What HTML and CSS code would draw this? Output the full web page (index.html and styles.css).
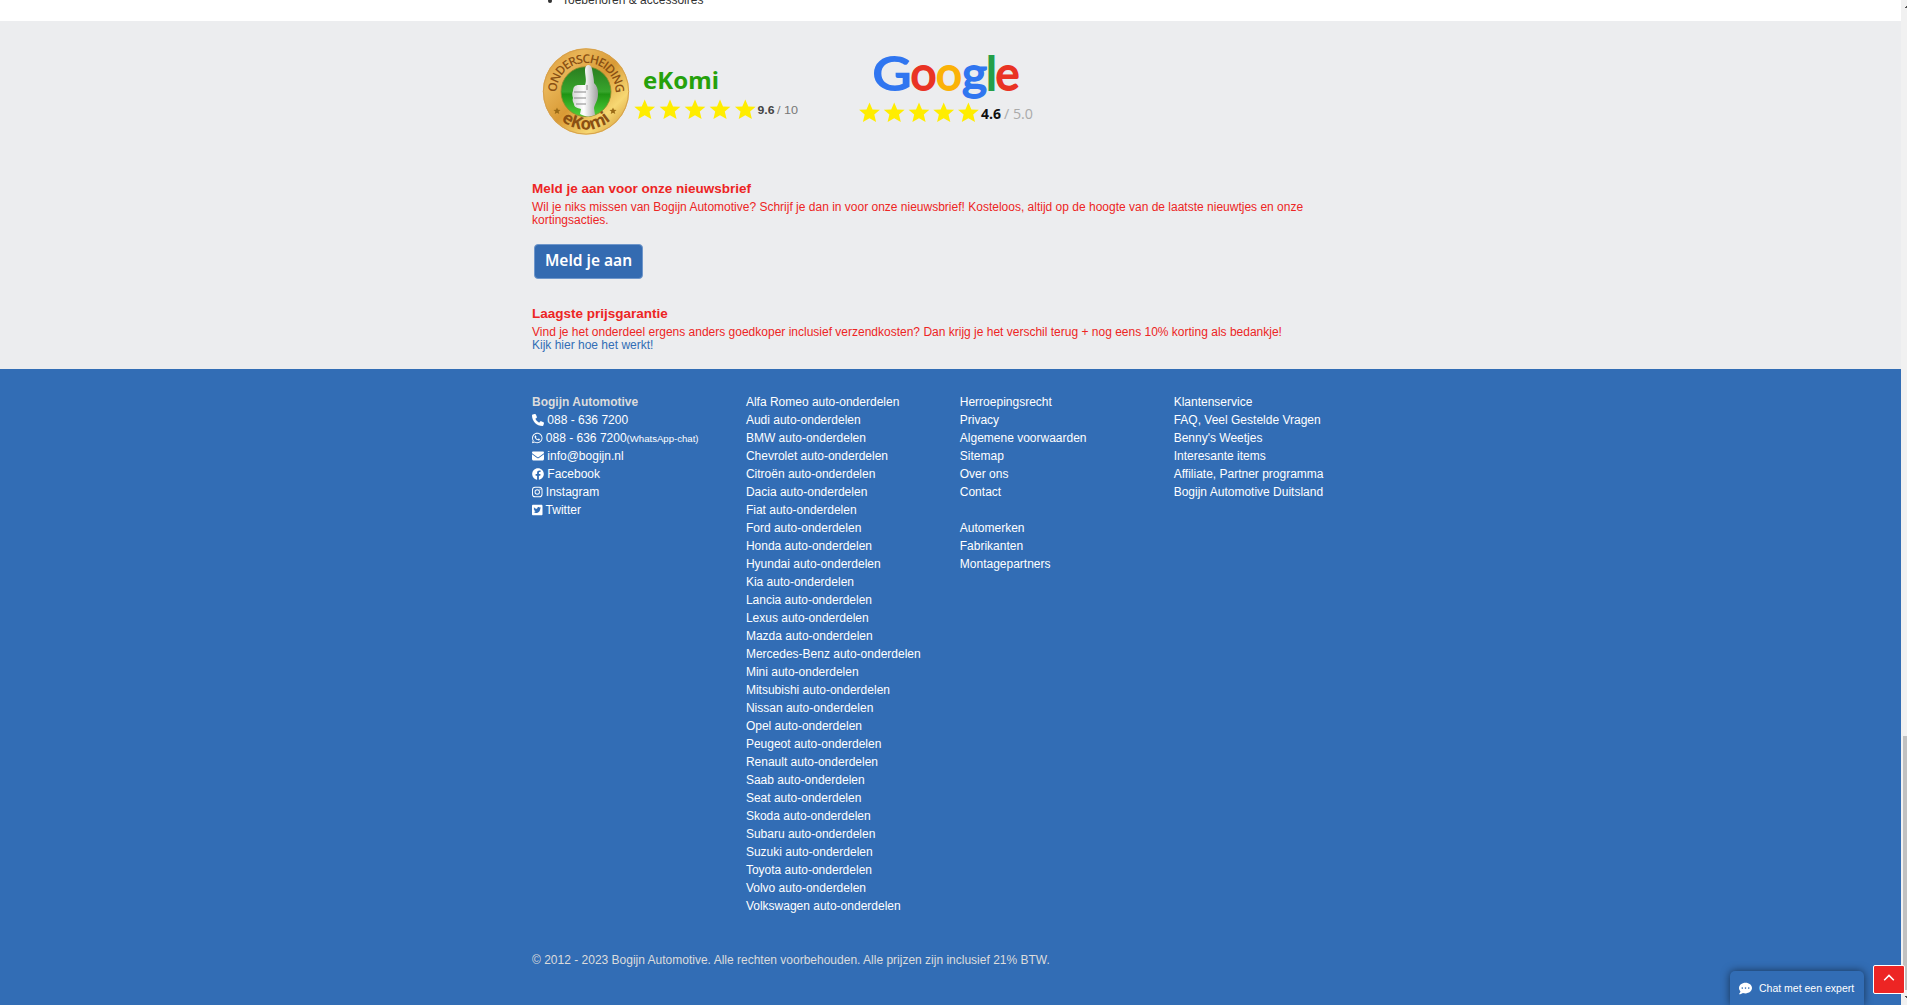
FILE: index.html
```html
<!DOCTYPE html>
<html lang="nl">
<head>
<meta charset="utf-8">
<title>Bogijn Automotive</title>
<link rel="stylesheet" href="styles.css">
</head>
<body>
<svg class="defs" width="0" height="0" aria-hidden="true">
  <defs>
    <path id="star" d="M0-10.6 3-3.6 10.4-3.2 4.8 1.6 6.6 9 0 5.2-6.6 9-4.8 1.6-10.4-3.2-3-3.6Z"/>
    <linearGradient id="gold" x1="0" y1="0" x2="1" y2="1">
      <stop offset="0" stop-color="#d9922f"/><stop offset=".25" stop-color="#e9b658"/><stop offset=".5" stop-color="#d99a35"/><stop offset=".75" stop-color="#f7d873"/><stop offset="1" stop-color="#c98622"/>
    </linearGradient>
    <linearGradient id="green" x1="0" y1="0" x2="0" y2="1">
      <stop offset="0" stop-color="#2a7c20"/><stop offset=".5" stop-color="#38a52c"/><stop offset=".55" stop-color="#209414"/><stop offset="1" stop-color="#4fd03a"/>
    </linearGradient>
    <linearGradient id="hand" x1="0" y1="0" x2="1" y2="0">
      <stop offset="0" stop-color="#d4d4d4"/><stop offset=".45" stop-color="#fff"/><stop offset="1" stop-color="#a0a0a0"/>
    </linearGradient>
    <path id="arc-top" d="M17.5 56A29.500 29.500 0 1 1 74.500 56"/>
    <path id="arc-bottom" d="M10 58.500A37.500 37.500 0 0 0 82 58.500"/>
  </defs>
</svg>
<div class="page">
  <main class="content">
    <div class="wrap"><ul class="list"><li>Toebehoren &amp; accessoires</li></ul></div>
  </main>
  <section class="promo">
    <div class="wrap">
      <div class="reviews">
        <svg class="ekomi" width="272" height="94" viewBox="0 0 272 94">
          <circle cx="46" cy="47.5" r="43.2" fill="url(#gold)"/>
          <circle cx="46" cy="47.5" r="42.6" fill="none" stroke="#d6a04c"/>
          <circle cx="46" cy="47.7" r="25" fill="url(#green)" stroke="#8e8b2c" stroke-width=".8"/>
          <path d="M45 26c0-6 6-7 7-1 1 6 2 10 2 14 3 3 4 6 4 11 0 7-3 9-4 14l1 7c-5 2-10 2-15-1l1-5c-4-1-7-2-7-5-1-2-2-4-1-6-1-3-1-5 0-7 0-4 2-6 6-6h6c2-5 0-9 0-15Z" fill="url(#hand)"/>
          <path d="M34 48h12M34 54h12M36 60h10M47 41v5" fill="none" stroke="#888" stroke-width="1"/>
          <text class="medal-top"><textPath href="#arc-top" startOffset="50%" text-anchor="middle">ONDERSCHEIDING</textPath></text>
          <text class="medal-bottom"><textPath href="#arc-bottom" startOffset="50%" text-anchor="middle">eKomi</textPath></text>
          <use href="#star" transform="translate(17 67) scale(.34)" fill="#9a6a16"/>
          <use href="#star" transform="translate(73 67) scale(.34)" fill="#9a6a16"/>
          <text class="ekomi-name" x="103" y="44.5" textLength="76" lengthAdjust="spacingAndGlyphs">eKomi</text>
          <g fill="#ffed00"><use href="#star" x="104.7" y="66"/><use href="#star" x="130" y="66"/><use href="#star" x="155" y="66"/><use href="#star" x="180" y="66"/><use href="#star" x="205.3" y="66"/></g>
          <text class="score" x="217.5" y="70" textLength="17" lengthAdjust="spacingAndGlyphs">9.6</text>
          <text class="score-max" x="237" y="70" textLength="21" lengthAdjust="spacingAndGlyphs">/ 10</text>
        </svg>
        <svg class="google" width="200" height="94" viewBox="0 0 200 94">
          <g class="google-name"><text x="60.5" y="46" fill="#3076f0" stroke="#3076f0" textLength="39" lengthAdjust="spacingAndGlyphs">G</text><text x="98.5" y="46" fill="#e93324" stroke="#e93324" textLength="26" lengthAdjust="spacingAndGlyphs">o</text><text x="124" y="46" fill="#fbb207" stroke="#fbb207" textLength="26" lengthAdjust="spacingAndGlyphs">o</text><text x="150" y="46" fill="#3076f0" stroke="#3076f0" textLength="25" lengthAdjust="spacingAndGlyphs">g</text><text x="174" y="46" fill="#249f49" stroke="#249f49">l</text><text x="183.500" y="46" fill="#e93324" stroke="#e93324" textLength="24" lengthAdjust="spacingAndGlyphs">e</text></g>
          <g fill="#ffed00"><use href="#star" x="57.5" y="69"/><use href="#star" x="82.2" y="69"/><use href="#star" x="107" y="69"/><use href="#star" x="131.7" y="69"/><use href="#star" x="156.4" y="69"/></g>
          <text class="rating" x="169" y="75" textLength="20" lengthAdjust="spacingAndGlyphs">4.6</text>
          <text class="rating-max" x="192" y="75" textLength="29" lengthAdjust="spacingAndGlyphs">/ 5.0</text>
        </svg>
      </div>
      <h2>Meld je aan voor onze nieuwsbrief</h2>
      <p>Wil je niks missen van Bogijn Automotive? Schrijf je dan in voor onze nieuwsbrief! Kosteloos, altijd op de hoogte van de laatste nieuwtjes en onze kortingsacties.</p>
      <a class="signup">Meld je aan</a>
      <h2>Laagste prijsgarantie</h2>
      <p>Vind je het onderdeel ergens anders goedkoper inclusief verzendkosten? Dan krijg je het verschil terug + nog eens 10% korting als bedankje!<br><a class="how">Kijk hier hoe het werkt!</a></p>
    </div>
  </section>
  <footer class="footer">
    <div class="wrap">
      <div class="columns">
        <ul>
          <li><strong>Bogijn Automotive</strong></li>
          <li><svg class="icon" viewBox="0 0 512 512"><path d="M164.900 24.600c-7.700-18.600-28-28.500-47.400-23.200l-88 24C12.100 30.200 0 46 0 64c0 247.400 200.600 448 448 448 18 0 33.800-12.100 38.600-29.500l24-88c5.300-19.400-4.600-39.700-23.200-47.400l-96-40c-16.300-6.800-35.200-2.100-46.300 11.600L304.700 368C234.300 334.700 177.300 277.700 144 207.300L193.300 167c13.700-11.200 18.400-30 11.600-46.300l-40-96z"/></svg> 088 - 636 7200</li>
          <li><svg class="icon narrow" viewBox="0 0 448 512"><path d="M380.900 97.100C339 55.100 283.200 32 223.900 32c-122.400 0-222 99.600-222 222 0 39.100 10.200 77.300 29.600 111L0 480l117.700-30.900c32.400 17.700 68.900 27 106.100 27h.1c122.300 0 224.100-99.600 224.100-222 0-59.300-25.200-115-67.100-157zm-157 341.600c-33.200 0-65.700-8.900-94-25.700l-6.700-4-69.800 18.300L72 359.200l-4.400-7c-18.500-29.400-28.200-63.300-28.200-98.200 0-101.700 82.800-184.500 184.600-184.500 49.300 0 95.600 19.200 130.400 54.100 34.800 34.900 56.200 81.200 56.100 130.500 0 101.800-84.900 184.600-186.600 184.600zm101.200-138.200c-5.500-2.800-32.800-16.200-37.900-18-5.100-1.900-8.800-2.800-12.500 2.800-3.700 5.600-14.300 18-17.600 21.800-3.200 3.700-6.500 4.200-12 1.400-32.600-16.300-54-29.100-75.500-66-5.700-9.800 5.700-9.100 16.300-30.300 1.800-3.700.9-6.900-.5-9.700-1.400-2.800-12.500-30.100-17.100-41.200-4.500-10.800-9.100-9.300-12.500-9.500-3.200-.2-6.900-.2-10.600-.2-3.700 0-9.700 1.400-14.800 6.900-5.100 5.600-19.400 19-19.400 46.300 0 27.300 19.900 53.700 22.600 57.400 2.800 3.700 39.100 59.700 94.800 83.800 35.200 15.200 49 16.500 66.600 13.900 10.700-1.600 32.800-13.400 37.400-26.400 4.600-13 4.600-24.100 3.200-26.400-1.300-2.500-5-3.900-10.500-6.600z"/></svg> 088 - 636 7200<small>(WhatsApp-chat)</small></li>
          <li><svg class="icon" viewBox="0 0 512 512"><path d="M48 64C21.500 64 0 85.500 0 112c0 15.100 7.100 29.300 19.200 38.400L236.800 313.600c11.400 8.500 27 8.500 38.400 0L492.800 150.400c12.100-9.100 19.200-23.300 19.200-38.400 0-26.500-21.500-48-48-48H48zM0 176V384c0 35.300 28.700 64 64 64H448c35.300 0 64-28.700 64-64V176L294.400 339.200c-22.800 17.100-54 17.100-76.800 0L0 176z"/></svg> info@bogijn.nl</li>
          <li><svg class="icon" viewBox="0 0 512 512"><path d="M504 256C504 119 393 8 256 8S8 119 8 256c0 123.800 90.700 226.400 209.300 245V327.700h-63V256h63v-54.600c0-62.200 37-96.500 93.700-96.500 27.100 0 55.500 4.800 55.500 4.800v61h-31.300c-30.800 0-40.400 19.100-40.400 38.700V256h68.800l-11 71.700h-57.800V501C413.300 482.400 504 379.800 504 256z"/></svg> Facebook</li>
          <li><svg class="icon narrow" viewBox="0 0 448 512"><path fill-rule="evenodd" d="M132 32h184a132 132 0 0 1 132 132v184a132 132 0 0 1-132 132H132A132 132 0 0 1 0 348V164A132 132 0 0 1 132 32Zm3 41a94 94 0 0 0-94 94v178a94 94 0 0 0 94 94h178a94 94 0 0 0 94-94V167a94 94 0 0 0-94-94ZM224 141a115 115 0 1 1 0 230 115 115 0 0 1 0-230Zm0 40a75 75 0 1 0 0 150 75 75 0 0 0 0-150Zm120-72a27 27 0 1 1 0 54 27 27 0 0 1 0-54Z"/></svg> Instagram</li>
          <li><svg class="icon narrow" viewBox="0 0 448 512"><path fill-rule="evenodd" d="M400 32H48C21.500 32 0 53.500 0 80v352c0 26.500 21.500 48 48 48h352c26.500 0 48-21.500 48-48V80c0-26.500-21.500-48-48-48zm-48.900 158.800c.2 2.800.2 5.700.2 8.500 0 86.700-66 186.600-186.600 186.600-37.200 0-71.700-10.800-100.700-29.400 5.300.6 10.400.8 15.800.8 30.700 0 58.900-10.400 81.400-28-28.800-.6-53-19.500-61.300-45.500 10.100 1.500 19.200 1.500 29.600-1.200-30-6.100-52.500-32.500-52.500-64.400v-.8c8.700 4.900 18.900 7.900 29.600 8.300a65.400 65.400 0 0 1-29.200-54.600c0-12.200 3.200-23.400 8.900-33.100 32.300 39.800 80.800 65.800 135.200 68.600-9.300-44.500 24-80.600 64-80.600 18.900 0 35.900 7.900 47.900 20.700 14.800-2.800 29-8.300 41.600-15.800-4.900 15.200-15.200 28-28.800 36.100 13.200-1.400 26-5.100 37.800-10.200-8.900 13.100-20.100 24.700-32.900 34z"/></svg> Twitter</li>
        </ul>
        <ul>
          <li>Alfa Romeo auto-onderdelen</li><li>Audi auto-onderdelen</li><li>BMW auto-onderdelen</li><li>Chevrolet auto-onderdelen</li><li>Citroën auto-onderdelen</li><li>Dacia auto-onderdelen</li><li>Fiat auto-onderdelen</li><li>Ford auto-onderdelen</li><li>Honda auto-onderdelen</li><li>Hyundai auto-onderdelen</li><li>Kia auto-onderdelen</li><li>Lancia auto-onderdelen</li><li>Lexus auto-onderdelen</li><li>Mazda auto-onderdelen</li><li>Mercedes-Benz auto-onderdelen</li><li>Mini auto-onderdelen</li><li>Mitsubishi auto-onderdelen</li><li>Nissan auto-onderdelen</li><li>Opel auto-onderdelen</li><li>Peugeot auto-onderdelen</li><li>Renault auto-onderdelen</li><li>Saab auto-onderdelen</li><li>Seat auto-onderdelen</li><li>Skoda auto-onderdelen</li><li>Subaru auto-onderdelen</li><li>Suzuki auto-onderdelen</li><li>Toyota auto-onderdelen</li><li>Volvo auto-onderdelen</li><li>Volkswagen auto-onderdelen</li>
        </ul>
        <ul>
          <li>Herroepingsrecht</li><li>Privacy</li><li>Algemene voorwaarden</li><li>Sitemap</li><li>Over ons</li><li>Contact</li><li class="gap">Automerken</li><li>Fabrikanten</li><li>Montagepartners</li>
        </ul>
        <ul>
          <li>Klantenservice</li><li>FAQ, Veel Gestelde Vragen</li><li>Benny's Weetjes</li><li>Interesante items</li><li>Affiliate, Partner programma</li><li>Bogijn Automotive Duitsland</li>
        </ul>
      </div>
      <div class="copyright">© 2012 - 2023 Bogijn Automotive. Alle rechten voorbehouden. Alle prijzen zijn inclusief 21% BTW.</div>
    </div>
  </footer>
</div>
<div class="scrollbar">
  <svg width="6" height="15" viewBox="0 0 6 15"><path d="M4 8V7H5V6H6V8Z" fill="#505050"/></svg>
  <div class="thumb"></div>
  <svg width="6" height="15" viewBox="0 0 6 15"><path d="M4 6H6V8H5V7H4Z" fill="#505050"/></svg>
</div>
<div class="chat"><svg width="13" height="13" viewBox="0 0 512 512"><path fill="#fff" fill-rule="evenodd" d="M256 32C114.600 32 0 125.100 0 240c0 49.600 21.400 95 57 130.700C44.500 421.100 2.700 466 2.200 466.500c-2.200 2.300-2.800 5.700-1.500 8.700S4.800 480 8 480c66.300 0 116-31.800 140.600-51.400 32.700 12.300 69 19.400 107.400 19.400 141.400 0 256-93.100 256-208S397.400 32 256 32ZM128 208a32 32 0 1 1 0 64 32 32 0 0 1 0-64Zm128 0a32 32 0 1 1 0 64 32 32 0 0 1 0-64Zm128 0a32 32 0 1 1 0 64 32 32 0 0 1 0-64Z"/></svg><span>Chat met een expert</span></div>
<a class="to-top"><svg width="12" height="8" viewBox="0 0 12 8"><path d="M1.200 6.200 6 1.400 10.800 6.200" fill="none" stroke="#fff" stroke-width="1.500"/></svg></a>
</body>
</html>
```
FILE: styles.css
```css
* { box-sizing: border-box; }
html, body { height: 100%; }
body {
  margin: 0;
  display: flex;
  overflow: hidden;
  font: 12px/13px "Liberation Sans", Arial, sans-serif;
  color: #333;
}
.defs { position: absolute; }
.page { flex: 1; height: 1005px; display: flex; flex-direction: column; }
.wrap { width: 856px; margin-left: 532px; }
ul { margin: 0; padding: 0; list-style: none; }

.content { height: 21px; overflow: hidden; background: #fff; }
.list { list-style: disc; padding-left: 30px; margin-top: -6px; }

.promo { height: 348px; background: #ecedef; color: #ed2524; overflow: hidden; }
.reviews { display: flex; padding: 23px 0 0 8px; height: 160px; }
.reviews svg { overflow: visible; }
.promo h2 { margin: 0 0 4px; font-size: 13.5px; line-height: 16px; font-weight: bold; }
.promo p { margin: 0; width: 815px; height: 26px; }
.how { color: #326db5; }
.signup {
  display: block;
  width: 109px;
  height: 35px;
  margin: 17px 0 27px 2px;
  border: 1px solid #6f97cb;
  border-radius: 4px;
  background: #346bb1;
  color: #fff;
  font: 600 15.5px/31px "Noto Sans", sans-serif;
  text-align: center;
}
.ekomi-name { font: bold 24px "Noto Sans", sans-serif; fill: #26a10b; }
.medal-top { font: 600 12px "Open Sans", sans-serif; fill: #8a5013; letter-spacing: -1px; }
.medal-bottom { font: bold 17px "Noto Sans", sans-serif; fill: #8a5013; }
.score { font: bold 11.5px "Liberation Sans", sans-serif; fill: #444; }
.score-max { font: 11.5px "Liberation Sans", sans-serif; fill: #777; }
.google-name { font: 46px Lato, sans-serif; stroke-width: 1.8px; }
.rating { font: bold 15px "Open Sans", sans-serif; fill: #111; }
.rating-max { font: 15px "Open Sans", sans-serif; fill: #aaa; }

.footer { flex: 1; background: #326db5; color: #fff; padding-top: 24px; line-height: 18px; }
.columns { display: grid; grid-template-columns: repeat(4, 213.9px); }
.columns li { height: 18px; white-space: nowrap; }
.columns .gap { margin-top: 18px; }
.columns strong, .copyright { color: #dcdcdc; }
.columns small { font-size: 9.6px; line-height: 1; }
.icon { width: 12px; height: 12px; vertical-align: -1.5px; fill: #fff; }
.icon.narrow { width: 10.5px; }
.copyright { margin-top: 36px; }

.scrollbar { width: 6px; background: #f1f1f1; display: flex; flex-direction: column; }
.thumb { margin: 721px 0 0 2px; height: 254px; background: #c1c1c1; }

.chat {
  position: absolute;
  left: 1730px;
  bottom: 0;
  width: 134px;
  height: 34px;
  padding-left: 9px;
  display: flex;
  align-items: center;
  gap: 7px;
  border-radius: 5px 5px 0 0;
  background: #326db5;
  box-shadow: 0 0 8px rgba(0, 0, 0, .55);
  color: #fff;
  font-size: 10.5px;
  white-space: nowrap;
}
.to-top {
  position: absolute;
  left: 1873px;
  top: 965px;
  width: 32px;
  height: 29px;
  display: flex;
  justify-content: center;
  padding-top: 8px;
  border: 1px solid #fff;
  border-radius: 2px;
  background: #ed2524;
}
```
